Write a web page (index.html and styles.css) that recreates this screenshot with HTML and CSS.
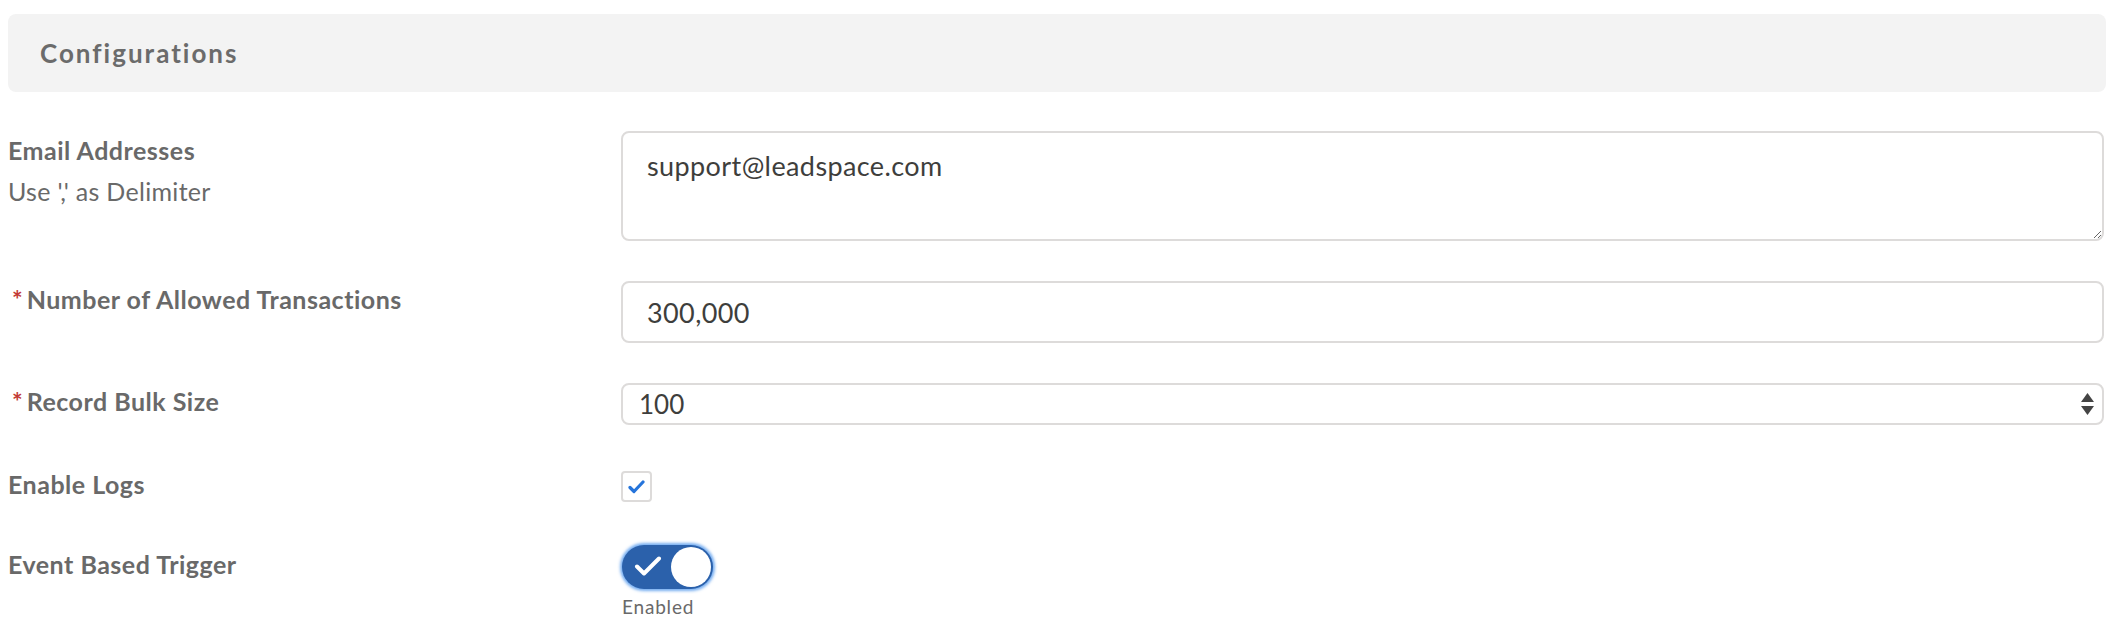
FILE: index.html
```html
<!DOCTYPE html>
<html lang="en">
<head>
<meta charset="utf-8">
<title>Configurations</title>
<link rel="stylesheet" href="styles.css">
</head>
<body>
<section class="card">
  <header class="section-header">
    <h2 class="section-title">Configurations</h2>
  </header>
  <div class="form">
    <div class="row row-email">
      <div class="label-col">
        <div class="label">Email Addresses</div>
        <div class="help">Use ',' as Delimiter</div>
      </div>
      <div class="control">
        <textarea class="textarea">support@leadspace.com</textarea>
      </div>
    </div>

    <div class="row row-number">
      <div class="label-col">
        <div class="label"><abbr class="required" title="required">*</abbr>Number of Allowed Transactions</div>
      </div>
      <div class="control">
        <input class="input" type="text" value="300,000">
      </div>
    </div>

    <div class="row row-bulk">
      <div class="label-col">
        <div class="label"><abbr class="required" title="required">*</abbr>Record Bulk Size</div>
      </div>
      <div class="control">
        <div class="select-wrap">
          <select class="select">
            <option>100</option>
            <option>200</option>
          </select>
          <svg class="select-arrows" width="13" height="23" viewBox="0 0 13 23" aria-hidden="true">
            <path d="M6.5 0 L13 9 L0 9 Z" fill="#444"/>
            <path d="M0 13 L13 13 L6.5 22 Z" fill="#444"/>
          </svg>
        </div>
      </div>
    </div>

    <div class="row row-logs">
      <div class="label-col">
        <div class="label">Enable Logs</div>
      </div>
      <div class="control">
        <span class="checkbox">
          <svg width="17" height="14" viewBox="0 0 17 14" aria-hidden="true">
            <path d="M2 7.5 L6 11.5 L15 2" fill="none" stroke="#2574db" stroke-width="3.2" stroke-linecap="round" stroke-linejoin="round"/>
          </svg>
        </span>
      </div>
    </div>

    <div class="row row-trigger">
      <div class="label-col">
        <div class="label">Event Based Trigger</div>
      </div>
      <div class="control">
        <div class="toggle-wrap">
          <span class="toggle">
            <svg class="toggle-check" width="30" height="24" viewBox="0 0 30 24" aria-hidden="true">
              <path d="M3 10.5 L10 17.5 L25 2.5" fill="none" stroke="#fff" stroke-width="4" stroke-linecap="round" stroke-linejoin="round"/>
            </svg>
            <span class="toggle-knob"></span>
          </span>
          <span class="toggle-caption">Enabled</span>
        </div>
      </div>
    </div>
  </div>
</section>
</body>
</html>
```

FILE: styles.css
```css
html, body {
  background: #ffffff;
}

body {
  margin: 14px 10px 0 8px;
  font-family: Lato, "Liberation Sans", sans-serif;
  color: #696969;
}

.section-header {
  height: 78px;
  background: #f3f3f3;
  border-radius: 8px;
  display: flex;
  align-items: center;
  padding-left: 32px;
}

.section-title {
  margin: 0;
  font-size: 26px;
  font-weight: 700;
  letter-spacing: 2px;
  color: #6b6b6b;
}

.form {
  padding-right: 2px;
}

.row {
  display: grid;
  grid-template-columns: 613px 1fr;
  align-items: start;
}

.row-email { margin-top: 39px; }
.row-number { margin-top: 40px; }
.row-bulk { margin-top: 40px; }
.row-logs { margin-top: 44px; }
.row-trigger { margin-top: 43px; }

.label {
  font-size: 25px;
  font-weight: 700;
  letter-spacing: 0.5px;
  line-height: 30px;
  color: #696969;
  padding-top: 3px;
}

.row-email .label { padding-top: 4px; }
.row-logs .label { padding-top: 0; }
.row-trigger .label { padding-top: 4px; }

.required {
  color: #c23934;
  text-decoration: none;
  border: 0;
  margin: 0 4px 0 4px;
  font-weight: 700;
  letter-spacing: 0;
}

.help {
  margin-top: 11px;
  font-size: 25px;
  letter-spacing: 0.3px;
  line-height: 30px;
  color: #696969;
}

.textarea,
.input,
.select {
  display: block;
  width: 100%;
  box-sizing: border-box;
  border: 2px solid #dddbda;
  border-radius: 8px;
  background: #fff;
  font-family: Lato, "Liberation Sans", sans-serif;
  font-size: 27px;
  letter-spacing: 0.4px;
  color: #3e3e3c;
  outline: none;
  margin: 0;
}

.textarea {
  height: 110px;
  padding: 13px 24px;
  line-height: 40px;
}

.input {
  height: 62px;
  padding: 0 24px;
}

.select-wrap {
  position: relative;
}

.select {
  height: 42px;
  padding: 0 40px 0 16px;
  font-size: 26px;
  letter-spacing: 0;
  -webkit-appearance: none;
  appearance: none;
}

.select-arrows {
  position: absolute;
  right: 10px;
  top: 10px;
  pointer-events: none;
}

.checkbox {
  display: flex;
  align-items: center;
  justify-content: center;
  width: 31px;
  height: 31px;
  box-sizing: border-box;
  margin-top: 2px;
  border: 2px solid #dddbda;
  border-radius: 4px;
  background: #fff;
}

.toggle-wrap {
  display: flex;
  flex-direction: column;
  align-items: flex-start;
  margin-left: 1px;
}

.toggle {
  display: flex;
  align-items: center;
  justify-content: space-between;
  width: 91px;
  height: 44px;
  box-sizing: border-box;
  padding: 0 2px 0 12px;
  border-radius: 22px;
  background: #2b61ab;
  box-shadow: 0 0 3px 2px rgba(60, 140, 235, 0.7);
}

.toggle-check {
  display: block;
  margin-top: 1px;
}

.toggle-knob {
  width: 40px;
  height: 40px;
  border-radius: 50%;
  background: #ffffff;
}

.toggle-caption {
  margin-top: 7px;
  font-size: 19px;
  letter-spacing: 0.8px;
  line-height: 22px;
  color: #696969;
}
```
